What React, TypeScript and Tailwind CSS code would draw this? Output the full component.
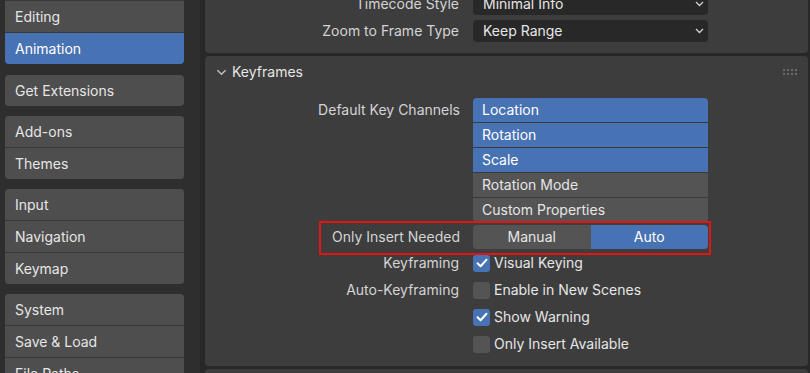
import { ReactNode } from 'react';

type NavItem = { label: string; active?: boolean };

const navGroups: NavItem[][] = [
  [{ label: 'Lights' }, { label: 'Editing' }, { label: 'Animation', active: true }],
  [{ label: 'Get Extensions' }],
  [{ label: 'Add-ons' }, { label: 'Themes' }],
  [{ label: 'Input' }, { label: 'Navigation' }, { label: 'Keymap' }],
  [{ label: 'System' }, { label: 'Save & Load' }, { label: 'File Paths' }],
];

const keyChannels = [
  { label: 'Location', on: true },
  { label: 'Rotation', on: true },
  { label: 'Scale', on: true },
  { label: 'Rotation Mode', on: false },
  { label: 'Custom Properties', on: false },
];

function SmallChevron({ className }: { className?: string }) {
  return (
    <svg width="9" height="6" viewBox="0 0 9 6" className={className}>
      <polyline points="1,1 4.5,4.5 8,1" fill="none" stroke="currentColor" strokeWidth="1.3" />
    </svg>
  );
}

function CheckMark() {
  return (
    <svg width="12" height="10" viewBox="0 0 12 10">
      <polyline
        points="1.5,5.2 4.6,8.2 10.5,1.8"
        fill="none"
        stroke="#ffffff"
        strokeWidth="2"
        strokeLinecap="round"
        strokeLinejoin="round"
      />
    </svg>
  );
}

function Row({ label, children }: { label?: string; children: ReactNode }) {
  return (
    <div className="flex h-[22px] shrink-0 items-center">
      <div className="w-[255px] shrink-0 pr-[1px] text-right text-[#d4d4d4]">{label}</div>
      <div className="ml-[13px] w-[235px] shrink-0">{children}</div>
    </div>
  );
}

function Dropdown({ value }: { value: string }) {
  return (
    <div className="flex h-[22px] items-center justify-between rounded-[4px] bg-[#282828] pl-[10px] pr-[4px] text-[#e6e6e6]">
      <span>{value}</span>
      <SmallChevron className="text-[#d0d0d0]" />
    </div>
  );
}

function Checkbox({ checked, label }: { checked: boolean; label: string }) {
  return (
    <div className="flex items-center gap-[4px]">
      <div
        className={`flex h-[17px] w-[17px] items-center justify-center rounded-[3px] ${
          checked ? 'bg-[#4772b3]' : 'bg-[#545454]'
        }`}
      >
        {checked && <CheckMark />}
      </div>
      <span className="text-[#e6e6e6]">{label}</span>
    </div>
  );
}

export default function App() {
  return (
    <div
      className="flex h-[373px] w-[810px] overflow-hidden bg-[#282828] text-[14px] leading-none"
      style={{ fontFamily: 'Inter, "Noto Sans", sans-serif' }}
    >
      {/* navigation region */}
      <div className="flex w-[200px] shrink-0 flex-col gap-[10px] bg-[#2e2e2e] pl-[5px] pr-[16px]">
        {navGroups.map((group, gi) => (
          <div
            key={gi}
            className={`flex shrink-0 flex-col gap-px overflow-hidden rounded-[4px] bg-[#383838] ${
              gi === 0 ? '-mt-[31px]' : gi === 1 ? 'mt-px' : ''
            }`}
          >
            {group.map(item => (
              <div
                key={item.label}
                className={`flex h-[31px] shrink-0 items-center pl-[10px] ${
                  item.active ? 'bg-[#4772b3] text-white' : 'bg-[#4e4e4e] text-[#e6e6e6]'
                }`}
              >
                {item.label}
              </div>
            ))}
          </div>
        ))}
      </div>

      {/* main region */}
      <div className="flex flex-1 flex-col gap-[3px] pl-[5px] pr-[2px]">
        <div className="-mt-[10px] flex shrink-0 flex-col gap-[5px] rounded-[4px] bg-[#3d3d3d] pb-[11px] pt-[3px]">
          <Row label="Timecode Style">
            <Dropdown value="Minimal Info" />
          </Row>
          <Row label="Zoom to Frame Type">
            <Dropdown value="Keep Range" />
          </Row>
        </div>

        <div className="flex shrink-0 flex-col rounded-[4px] bg-[#3d3d3d] pb-[11px]">
          <div className="flex h-[32px] shrink-0 items-center pl-[11px] pr-[11px]">
            <SmallChevron className="mt-[1px] h-[7px] w-[11px] text-[#bdbdbd]" />
            <span className="ml-[5px] text-[#e6e6e6]">Keyframes</span>
            <div className="ml-auto grid grid-cols-4 gap-x-[2px] gap-y-[2px]">
              {Array.from({ length: 8 }).map((_, i) => (
                <div key={i} className="h-[2px] w-[2px] bg-[#6a6a6a]" />
              ))}
            </div>
          </div>

          <div className="mt-[10px] flex shrink-0">
            <div className="w-[255px] shrink-0 pt-[5px] text-right text-[#d4d4d4]">Default Key Channels</div>
            <div className="ml-[13px] flex w-[235px] flex-col gap-px overflow-hidden rounded-[4px] bg-[#3a3a3a]">
              {keyChannels.map(ch => (
                <div
                  key={ch.label}
                  className={`flex h-[24px] shrink-0 items-center pl-[9px] ${
                    ch.on ? 'bg-[#4772b3] text-white' : 'bg-[#545454] text-[#e6e6e6]'
                  }`}
                >
                  {ch.label}
                </div>
              ))}
            </div>
          </div>

          <div className="relative mt-[3px] flex h-[24px] shrink-0 items-center">
            <div className="pointer-events-none absolute -bottom-[6px] -top-[4px] left-[114px] w-[392px] border-2 border-[#e41414]" />
            <div className="w-[255px] shrink-0 text-right text-[#d4d4d4]">Only Insert Needed</div>
            <div className="ml-[13px] flex h-[24px] w-[235px] shrink-0 overflow-hidden rounded-[4px]">
              <div className="flex flex-1 items-center justify-center bg-[#545454] text-[#e6e6e6]">Manual</div>
              <div className="flex flex-1 items-center justify-center bg-[#4772b3] text-white">Auto</div>
            </div>
          </div>

          <div className="mt-[3px] flex shrink-0 flex-col gap-[5px]">
            <Row label="Keyframing">
              <Checkbox checked label="Visual Keying" />
            </Row>
            <Row label="Auto-Keyframing">
              <Checkbox checked={false} label="Enable in New Scenes" />
            </Row>
            <Row>
              <Checkbox checked label="Show Warning" />
            </Row>
            <Row>
              <Checkbox checked={false} label="Only Insert Available" />
            </Row>
          </div>
        </div>

        <div className="h-[20px] shrink-0 rounded-[4px] bg-[#3d3d3d]" />
      </div>
    </div>
  );
}
